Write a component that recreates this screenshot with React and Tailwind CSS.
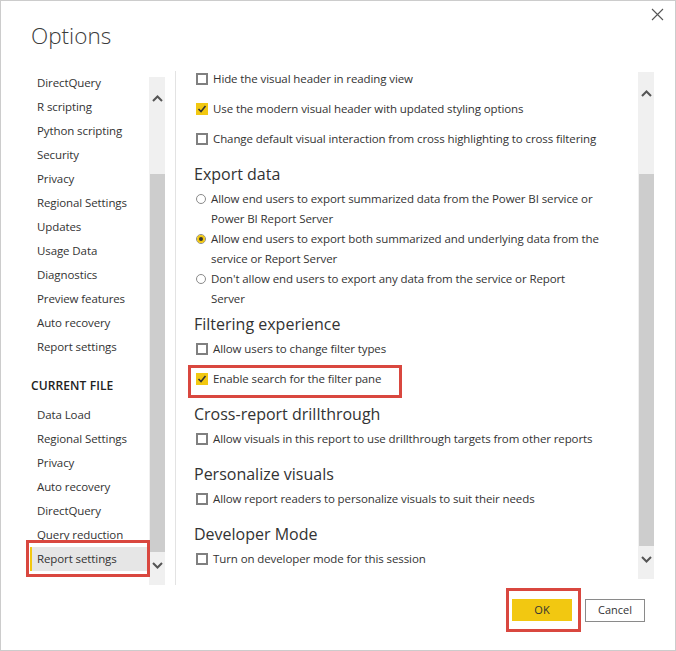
import React from 'react';

const font = { fontFamily: '"Open Sans", "Noto Sans", sans-serif' };

const globalNav = [
  'DirectQuery',
  'R scripting',
  'Python scripting',
  'Security',
  'Privacy',
  'Regional Settings',
  'Updates',
  'Usage Data',
  'Diagnostics',
  'Preview features',
  'Auto recovery',
  'Report settings',
];

const fileNav = [
  'Data Load',
  'Regional Settings',
  'Privacy',
  'Auto recovery',
  'DirectQuery',
  'Query reduction',
];

const Chevron = ({ up }) => (
  <svg width="11" height="7" viewBox="0 0 11 7" className="block">
    <path
      d={up ? 'M1 6 L5.5 1.5 L10 6' : 'M1 1 L5.5 5.5 L10 1'}
      fill="none"
      stroke="#555"
      strokeWidth="2"
    />
  </svg>
);

const ScrollBar = ({ className, upTop, thumbTop, thumbBottom }) => (
  <div className={`relative w-[16px] bg-[#f0f0f0] ${className}`}>
    <div className="absolute left-[1px] right-0 bg-[#cdcdcd]" style={{ top: thumbTop, bottom: thumbBottom }} />
    <div className="absolute left-[3px]" style={{ top: upTop }}>
      <Chevron up />
    </div>
    <div className="absolute left-[3px] bottom-[16px]">
      <Chevron />
    </div>
  </div>
);

const Checkbox = ({ checked, label }) => (
  <div className="flex items-center h-[20px] mb-[10px]">
    {checked ? (
      <span className="w-[12px] h-[12px] bg-[#f2c811] flex items-center justify-center">
        <svg width="10" height="10" viewBox="0 0 10 10">
          <path d="M1.5 5 L4 7.5 L8.5 2" fill="none" stroke="#333" strokeWidth="1.6" />
        </svg>
      </span>
    ) : (
      <span className="w-[12px] h-[12px] border-2 border-[#808080] bg-white" />
    )}
    <span className="ml-[5px] text-[11.5px] tracking-[-0.1px] text-[#333]">{label}</span>
  </div>
);

const Radio = ({ selected, lines }) => (
  <div className="flex items-start">
    <span className="mt-[5px] w-[10px] h-[10px] rounded-full border border-[#8a8a8a] flex items-center justify-center shrink-0">
      {selected && <span className="w-[8px] h-[8px] rounded-full border-2 border-[#f2c811] bg-[#333]" />}
    </span>
    <div className="ml-[5px] text-[11.5px] tracking-[-0.1px] leading-[20px] text-[#333]">
      {lines.map((l) => (
        <div key={l}>{l}</div>
      ))}
    </div>
  </div>
);

const Heading = ({ children }) => (
  <div className="h-[30px] flex items-center text-[16px] text-[#333] -ml-[2px]">{children}</div>
);

export default function App() {
  return (
    <div style={font} className="relative w-[676px] h-[651px] bg-white border border-[#cccccc] overflow-hidden">
      {/* Header */}
      <div className="h-[70px] flex justify-between">
        <h1 className="pl-[30px] pt-[19px] text-[22.5px] font-light text-[#3b3b3b] leading-[32px]">Options</h1>
        <button className="mr-[11px] mt-[7px] h-[13px]">
          <svg width="13" height="13" viewBox="0 0 13 13">
            <path d="M1 1 L12 12 M12 1 L1 12" stroke="#555" strokeWidth="1.1" />
          </svg>
        </button>
      </div>

      {/* Body */}
      <div className="flex h-[514px]">
        {/* Left navigation */}
        <div className="flex pl-[29px]">
          <nav className="w-[117px] text-[11.5px] tracking-[-0.1px] text-[#333] overflow-hidden">
            {globalNav.map((item) => (
              <div key={item + 'g'} className="h-[24px] pl-[7px] flex items-center whitespace-nowrap">
                {item}
              </div>
            ))}
            <div className="h-[44px] pt-[18px] pl-[1px] leading-[18px] text-[12px] font-semibold text-[#222] tracking-[0.1px]">
              CURRENT FILE
            </div>
            {fileNav.map((item) => (
              <div key={item + 'f'} className="h-[24px] pl-[7px] flex items-center whitespace-nowrap">
                {item}
              </div>
            ))}
            <div className="h-[24px] pl-[5px] flex items-center bg-[#e6e6e6] border-l-2 border-[#f2c811] whitespace-nowrap">
              Report settings
            </div>
          </nav>
          <ScrollBar className="ml-[2px] mt-[6px] h-[508px]" upTop="18px" thumbTop="97px" thumbBottom="33px" />
        </div>
        <div className="ml-[10px] w-px h-[514px] bg-[#e3e3e3]" />

        {/* Content */}
        <div className="flex-1 pl-[20px] -mt-[2px] overflow-hidden">
          <Checkbox label="Hide the visual header in reading view" />
          <Checkbox checked label="Use the modern visual header with updated styling options" />
          <Checkbox label="Change default visual interaction from cross highlighting to cross filtering" />
          <Heading>Export data</Heading>
          <Radio lines={['Allow end users to export summarized data from the Power BI service or', 'Power BI Report Server']} />
          <Radio selected lines={['Allow end users to export both summarized and underlying data from the', 'service or Report Server']} />
          <Radio lines={["Don't allow end users to export any data from the service or Report", 'Server']} />
          <Heading>Filtering experience</Heading>
          <Checkbox label="Allow users to change filter types" />
          <Checkbox checked label="Enable search for the filter pane" />
          <Heading>Cross-report drillthrough</Heading>
          <Checkbox label="Allow visuals in this report to use drillthrough targets from other reports" />
          <Heading>Personalize visuals</Heading>
          <Checkbox label="Allow report readers to personalize visuals to suit their needs" />
          <Heading>Developer Mode</Heading>
          <Checkbox label="Turn on developer mode for this session" />
        </div>

        <ScrollBar className="mt-[1px] mr-[21px] h-[507px]" upTop="18px" thumbTop="102px" thumbBottom="33px" />
      </div>

      {/* Footer */}
      <div className="flex justify-end pr-[30px] pt-[14px] gap-[13px] text-[11px] text-[#333]">
        <button className="w-[60px] h-[22px] bg-[#f2c811]">OK</button>
        <button className="w-[60px] h-[23px] border border-[#8a8a8a] bg-white">Cancel</button>
      </div>

      {/* Annotation boxes */}
      <div className="absolute left-[187px] top-[364px] w-[214px] h-[33px] border-[3px] border-[#d9473f]" />
      <div className="absolute left-[25px] top-[539px] w-[124px] h-[37px] border-[3px] border-[#d9473f]" />
      <div className="absolute left-[505px] top-[587px] w-[75px] h-[44px] border-[3px] border-[#d9473f]" />
    </div>
  );
}
